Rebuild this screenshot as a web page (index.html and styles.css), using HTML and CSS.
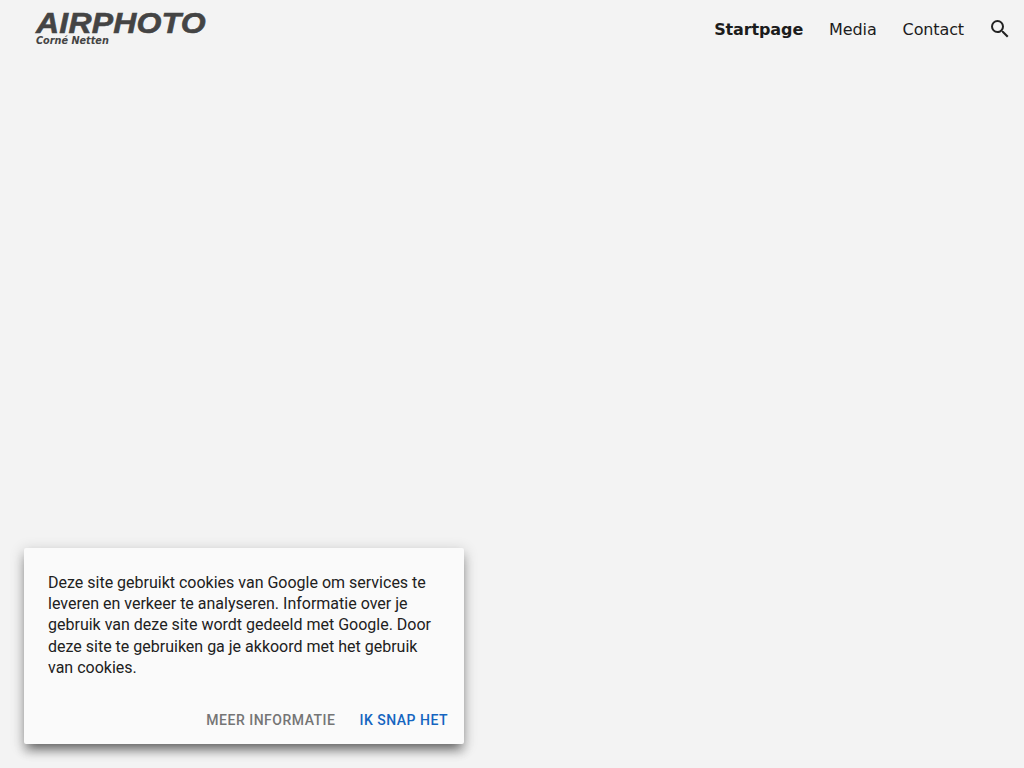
FILE: index.html
```html
<!DOCTYPE html>
<html lang="nl">
<head>
<meta charset="utf-8">
<title>Airphoto</title>
<link rel="stylesheet" href="styles.css">
</head>
<body>
<header class="topbar">
  <a class="logo" href="#">
    <span class="logo-title">AIRPHOTO</span>
    <span class="logo-sub">Corné Netten</span>
  </a>
  <nav class="nav">
    <a class="nav-link nav-active" href="#">Startpage</a>
    <a class="nav-link" href="#">Media</a>
    <a class="nav-link" href="#">Contact</a>
    <svg class="search" viewBox="0 0 24 24" width="24" height="24" aria-label="Zoeken"><path d="M15.5 14h-.79l-.28-.27A6.471 6.471 0 0 0 16 9.5 6.5 6.5 0 1 0 9.5 16c1.61 0 3.09-.59 4.23-1.57l.27.28v.79l5 4.99L20.49 19l-4.99-5zm-6 0C7.01 14 5 11.99 5 9.5S7.01 5 9.5 5 14 7.01 14 9.5 11.99 14 9.5 14z"/></svg>
  </nav>
</header>
<aside class="cookie">
  <p class="cookie-text">Deze site gebruikt cookies van Google om services te leveren en verkeer te analyseren. Informatie over je gebruik van deze site wordt gedeeld met Google. Door deze site te gebruiken ga je akkoord met het gebruik van cookies.</p>
  <div class="cookie-actions">
    <a class="cookie-btn cookie-more" href="#">MEER INFORMATIE</a>
    <a class="cookie-btn cookie-ok" href="#">IK SNAP HET</a>
  </div>
</aside>
</body>
</html>
```
FILE: styles.css
```css
* { box-sizing: border-box; }
html, body { height: 100%; }
body {
  margin: 0;
  background: #f3f3f3;
  overflow: hidden;
  position: relative;
  font-family: "DejaVu Sans", sans-serif;
}
a { text-decoration: none; color: inherit; }
.topbar {
  display: flex;
  justify-content: space-between;
  align-items: flex-start;
  padding: 8px 12px 0 36px;
}
.logo {
  display: flex;
  flex-direction: column;
  margin-top: 1px;
  color: #444;
  font-style: italic;
  font-weight: 700;
}
.logo-title {
  font-family: "Liberation Sans", Arial, sans-serif;
  font-size: 30px;
  line-height: 28px;
  letter-spacing: 0.2px;
  transform: scaleX(1.065);
  transform-origin: left center;
  -webkit-text-stroke: 0.6px #444;
}
.logo-sub {
  font-size: 9.7px;
  line-height: 10px;
  margin-top: -1px;
}
.nav {
  display: flex;
  align-items: center;
  gap: 26px;
  color: #1c1c1c;
  font-size: 16px;
  letter-spacing: -0.12px;
  padding-top: 12px;
}
.nav-active { font-weight: 700; }
.search { display: block; margin: -3px 0 -2px -2px; fill: #222; }
.cookie {
  position: absolute;
  left: 24px;
  bottom: 24px;
  width: 440px;
  height: 196px;
  background: #fafafa;
  border-radius: 2px;
  box-shadow: 0 8px 10px -5px rgba(0,0,0,.5), 0 3px 14px 2px rgba(0,0,0,.14), 0 8px 10px 1px rgba(0,0,0,.14);
  padding: 24px;
  font-family: Roboto, sans-serif;
  display: flex;
  flex-direction: column;
}
.cookie-text {
  margin: 0;
  font-size: 16px;
  line-height: 21.2px;
  color: #212121;
}
.cookie-actions {
  margin-top: auto;
  display: flex;
  justify-content: flex-end;
  gap: 24px;
  margin-right: -8px;
  margin-bottom: -8px;
  font-size: 14px;
  font-weight: 500;
  letter-spacing: .5px;
  line-height: 16px;
}
.cookie-more { color: #757575; }
.cookie-ok { color: #1565c0; }
```
